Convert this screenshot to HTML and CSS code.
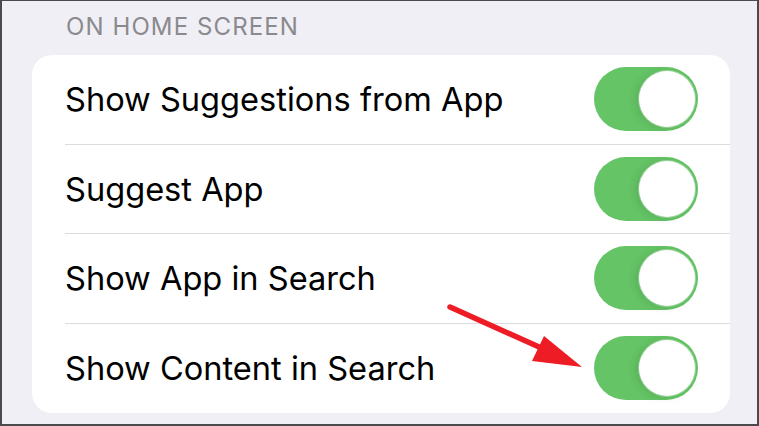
FILE: index.html
```html
<!DOCTYPE html>
<html>
<head>
<meta charset="utf-8">
<link rel="stylesheet" href="styles.css">
</head>
<body>
<div class="screen">
  <div class="section-header">ON HOME SCREEN</div>
  <div class="card">
    <div class="row"><span class="label">Show Suggestions from App</span><span class="toggle"><span class="knob"></span></span></div>
    <div class="row"><span class="label">Suggest App</span><span class="toggle"><span class="knob"></span></span></div>
    <div class="row"><span class="label">Show App in Search</span><span class="toggle"><span class="knob"></span></span></div>
    <div class="row last"><span class="label">Show Content in Search</span><span class="toggle"><span class="knob"></span></span></div>
  </div>
  <svg class="arrow" width="759" height="426" viewBox="0 0 759 426">
    <line x1="450" y1="307" x2="548" y2="351" stroke="#ee1c25" stroke-width="5.5" stroke-linecap="round"/>
    <polygon points="582,367 544,336 532,361" fill="#ee1c25"/>
  </svg>
</div>
</body>
</html>
```
FILE: styles.css
```css
html, body {
  margin: 0;
  padding: 0;
}
body {
  width: 759px;
  height: 426px;
  overflow: hidden;
  font-family: "Inter", "Liberation Sans", sans-serif;
}
.screen {
  position: relative;
  width: 759px;
  height: 426px;
  box-sizing: border-box;
  background: #f0eff5;
  border: 2px solid #4a4a4c;
  border-top-width: 1px;
  padding: 0 27px 0 30px;
  display: flex;
  flex-direction: column;
}
.section-header {
  padding: 12px 0 0 34px;
  height: 54px;
  box-sizing: border-box;
  font-size: 24px;
  line-height: 28px;
  color: #8a8a8e;
  letter-spacing: 1.1px;
}
.card {
  background: #ffffff;
  border-radius: 20px;
  display: flex;
  flex-direction: column;
}
.row {
  height: 89.5px;
  box-sizing: border-box;
  margin-left: 33px;
  padding-right: 32px;
  border-bottom: 1px solid #dcdcde;
  display: flex;
  align-items: center;
  justify-content: space-between;
}
.row.last {
  border-bottom: none;
}
.label {
  font-size: 32.6px;
  color: #000;
  letter-spacing: 0;
}
.toggle {
  position: relative;
  width: 104px;
  height: 64px;
  border-radius: 32px;
  background: #65c466;
  flex: none;
}
.knob {
  position: absolute;
  top: 4px;
  right: 3px;
  width: 56px;
  height: 56px;
  border-radius: 50%;
  background: #ffffff;
  box-shadow: -3px 1px 8px rgba(0, 60, 0, 0.15), 0 0 0 1px rgba(255, 255, 255, 0.4);
}
.arrow {
  position: absolute;
  left: -2px;
  top: -1px;
  pointer-events: none;
}
```
